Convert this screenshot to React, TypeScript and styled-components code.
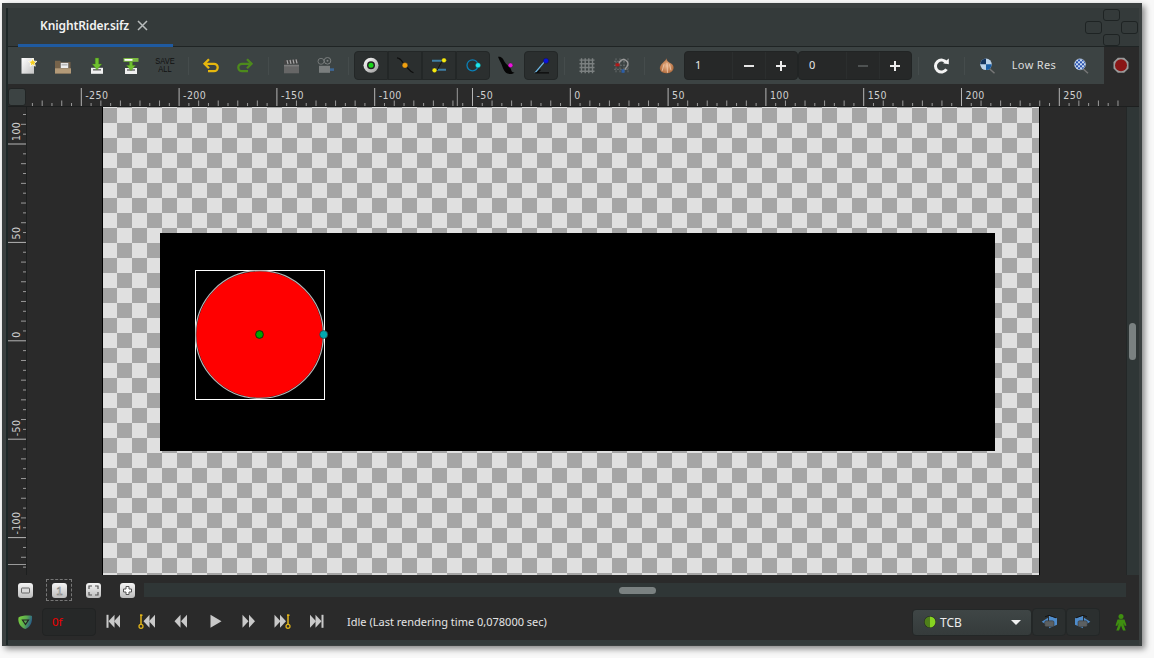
import React from "react";
import styled, { createGlobalStyle } from "styled-components";

const Global = createGlobalStyle`
  html, body { margin: 0; padding: 0; background: #f8f8f8; }
  body { width: 1154px; height: 658px; overflow: hidden; font-family: "Noto Sans", "Liberation Sans", sans-serif; }
`;

const Win = styled.div`
  margin: 3px 0 0 2px;
  width: 1140px;
  height: 643px;
  box-sizing: border-box;
  padding: 5px 3px 1px 4px;
  background: #3b4040;
  box-shadow: 3px 3px 6px rgba(0, 0, 0, 0.45);
  display: flex;
`;
const Inner = styled.div`
  flex: 1;
  min-width: 0;
  border-left: 2px solid #1d2727;
  display: flex;
  flex-direction: column;
  background: #2a2a2a;
`;
const TabBar = styled.div`
  height: 39px;
  box-sizing: border-box;
  background: #343a3a;
  border-bottom: 1px solid #1f2424;
  display: flex;
  justify-content: space-between;
  padding: 0 1px 0 10px;
`;
const Tab = styled.div`
  width: 155px;
  height: 39px;
  box-sizing: border-box;
  border-bottom: 3px solid #1f5aa0;
  padding: 0 0 2px 22px;
  display: flex;
  align-items: center;
  gap: 8px;
  color: #f2f2f2;
  font-size: 12px;
  font-weight: 600;
  letter-spacing: -0.1px;
`;
const TabClose = styled.svg`
  width: 11px;
  height: 11px;
`;
const DockGrid = styled.div`
  display: grid;
  grid-template-columns: 17px 17px 17px;
  grid-template-rows: 12px 13px 12px;
  column-gap: 1px;
  width: 53px;
  margin-top: 1px;
`;
const DockCell = styled.div<{ $c: number; $r: number }>`
  grid-column: ${(p) => p.$c};
  grid-row: ${(p) => p.$r};
  background: #343a3a;
  border: 1px solid #1e2323;
  border-radius: 3px;
  box-sizing: border-box;
`;
const Toolbar = styled.div`
  height: 37px;
  display: flex;
  background: #3c4343;
`;
const ToolMain = styled.div`
  flex: 1;
  display: flex;
  align-items: center;
  padding-left: 4px;
`;
const RecordCell = styled.div`
  width: 35px;
  box-sizing: border-box;
  padding-right: 2px;
  background: #2a2a2a;
  display: flex;
  align-items: center;
  justify-content: center;
`;
const Slot = styled.div<{ $w?: number }>`
  width: ${(p) => p.$w ?? 34}px;
  height: 29px;
  flex: none;
  display: flex;
  align-items: center;
  justify-content: center;
`;
const Sep = styled.div<{ $w?: number }>`
  width: ${(p) => p.$w ?? 12}px;
  flex: none;
  display: flex;
  justify-content: center;
  &::before {
    content: "";
    width: 1px;
    height: 18px;
    background: #454c4c;
  }
`;
const ToolBtn = styled.div<{ $first?: boolean; $last?: boolean }>`
  width: 34px;
  height: 29px;
  flex: none;
  box-sizing: border-box;
  background: #2b2f2f;
  border: 1px solid #232727;
  border-radius: ${(p) => (p.$first ? "4px 0 0 4px" : p.$last ? "0 4px 4px 0" : "0")};
  display: flex;
  align-items: center;
  justify-content: center;
`;
const ActiveBtn = styled(ToolBtn)`
  border-radius: 4px;
`;
const SaveAll = styled.div`
  color: #111;
  font: 8.5px/8px "Liberation Sans", sans-serif;
  text-align: center;
  transform: scaleX(0.88);
  margin-top: -2px;
`;
const Spin = styled.div`
  width: 114px;
  height: 29px;
  flex: none;
  box-sizing: border-box;
  display: flex;
  background: #262828;
  border: 1px solid #212424;
  border-radius: 4px;
`;
const SpinValue = styled.div`
  width: 47px;
  color: #e8e8e8;
  font: 11px "Noto Sans", sans-serif;
  padding: 0 0 2px 10px;
  box-sizing: border-box;
  display: flex;
  align-items: center;
`;
const SpinBtn = styled.div`
  flex: 1;
  border-left: 1px solid #2b2e2e;
  display: flex;
  align-items: center;
  justify-content: center;
`;
const LowRes = styled.div`
  width: 61px;
  flex: none;
  text-align: center;
  font-size: 11px;
  letter-spacing: 0.35px;
  color: #dcdcdc;
  padding: 0 0 2px 3px;
  box-sizing: border-box;
`;
const RulerRow = styled.div`
  height: 23px;
  display: flex;
  flex: none;
  box-sizing: border-box;
  border-bottom: 1px solid #1d1f1f;
`;
const Corner = styled.div`
  width: 18px;
  height: 18px;
  margin: 4px 1px 0 0;
  box-sizing: border-box;
  background: #3c4343;
  border: 1px solid #212424;
  border-radius: 3px;
`;
const RulerSvg = styled.svg`
  display: block;
  font-family: "DejaVu Sans Condensed", "Noto Sans", sans-serif;
`;
const CanvasRow = styled.div`
  height: 468px;
  flex: none;
  display: flex;
  overflow: hidden;
`;
const VRulerBox = styled.div`
  width: 19px;
  flex: none;
  box-sizing: border-box;
  border-right: 1px solid #1d1f1f;
`;
const Viewport = styled.div`
  flex: 1;
  min-width: 0;
  padding-left: 75px;
  background: #2a2a2a;
`;
const Checker = styled.div`
  position: relative;
  width: 936px;
  height: 100%;
  border-left: 1px solid #000;
  border-right: 1px solid #000;
  background: repeating-conic-gradient(#e0e0e0 0 25%, #a5a5a5 0 50%) -1px 1px / 30px 30px;
`;
const Doc = styled.div`
  position: absolute;
  left: 57px;
  top: 126px;
  width: 835px;
  height: 218px;
  background: #000;
`;
const ShapeSvg = styled.svg`
  position: absolute;
  left: 30px;
  top: 32px;
`;
const VTrack = styled.div`
  width: 13px;
  flex: none;
  box-sizing: border-box;
  background: #2f3636;
  border-left: 1px solid #232727;
  padding: 216px 0 0 2px;
`;
const VThumb = styled.div`
  width: 7px;
  height: 37px;
  border-radius: 4px;
  background: #7a8181;
`;
const ScrollRow = styled.div`
  height: 25px;
  box-sizing: border-box;
  flex: none;
  display: flex;
  align-items: center;
  padding: 5px 13px 0 0;
`;
const FrameBtnSlot = styled.div`
  width: 34px;
  height: 22px;
  flex: none;
  display: flex;
  align-items: center;
  justify-content: center;
`;
const FocusBox = styled.div`
  width: 26px;
  height: 22px;
  box-sizing: border-box;
  border: 1px dashed #777;
  display: flex;
  align-items: center;
  justify-content: center;
`;
const FrameBtn = styled.div`
  width: 15px;
  height: 15px;
  border-radius: 3px;
  background: linear-gradient(#f4f4f4, #bcbcbc);
  display: flex;
  align-items: center;
  justify-content: center;
`;
const HTrack = styled.div`
  flex: 1;
  height: 14px;
  background: #2f3636;
  display: flex;
  align-items: center;
  padding-left: 475px;
`;
const HThumb = styled.div`
  width: 37px;
  height: 7px;
  border-radius: 4px;
  background: #7a8181;
`;
const StatusRow = styled.div`
  height: 40px;
  box-sizing: border-box;
  padding-top: 4px;
  flex: none;
  display: flex;
  align-items: center;
`;
const Shield = styled.div`
  width: 34px;
  flex: none;
  display: flex;
  justify-content: center;
`;
const TimeBox = styled.div`
  width: 54px;
  height: 28px;
  flex: none;
  box-sizing: border-box;
  background: #262828;
  border: 1px solid #212323;
  border-radius: 4px;
  color: #f00000;
  font: 11.5px "Noto Sans", sans-serif;
  display: flex;
  align-items: center;
  padding: 0 0 1px 9px;
`;
const PlaySlot = styled.div`
  width: 34px;
  flex: none;
  display: flex;
  justify-content: center;
`;
const StatusText = styled.div`
  flex: 1;
  padding: 0 0 1px 13px;
  color: #e4e4e4;
  font-size: 11px;
`;
const Combo = styled.div`
  width: 120px;
  height: 27px;
  flex: none;
  box-sizing: border-box;
  background: linear-gradient(#3f4646, #353b3b);
  border: 1px solid #232727;
  border-radius: 4px;
  display: flex;
  align-items: center;
  padding: 0 10px 0 10px;
  gap: 3px;
  color: #ececec;
  font-size: 12px;
`;
const ComboLabel = styled.span`
  flex: 1;
`;
const Caret = styled.div`
  width: 0;
  height: 0;
  border-left: 5px solid transparent;
  border-right: 5px solid transparent;
  border-top: 5px solid #f0f0f0;
`;
const InterpBtn = styled.div`
  width: 34px;
  height: 28px;
  flex: none;
  box-sizing: border-box;
  background: #2b2f2f;
  border: 1px solid #232727;
  border-radius: 4px;
  display: flex;
  align-items: center;
  justify-content: center;
`;
const Person = styled.div`
  width: 39px;
  box-sizing: border-box;
  padding-left: 3px;
  flex: none;
  display: flex;
  justify-content: center;
`;
const Band = styled.div`
  height: 5px;
  flex: none;
  background: #333a3a;
`;

const I: React.FC<{ children: React.ReactNode; s?: number }> = ({ children, s = 24 }) => (
  <svg width={s} height={s} viewBox={`0 ${s === 24 ? 0.7 : 0} ${s} ${s}`} style={{ display: "block" }}>
    {children}
  </svg>
);

const NewIcon = () => (
  <I>
    <defs>
      <linearGradient id="pg" x1="0" y1="0" x2="1" y2="1">
        <stop offset="0" stopColor="#fff" />
        <stop offset="1" stopColor="#c4c4c4" />
      </linearGradient>
    </defs>
    <rect x="4.5" y="4.7" width="12.5" height="15.7" fill="url(#pg)" />
    <polygon points="15.7,4.9 16.9,7.8 19.9,8.1 17.6,10 18.3,12.9 15.7,11.4 13.1,12.9 13.8,10 11.5,8.1 14.5,7.8" fill="#f5cf1e" stroke="#fff" strokeWidth="0.8" />
  </I>
);
const OpenIcon = () => (
  <I>
    <path d="M4 7.5h5l1 1.3h9.5V20.2H4z" fill="#76634a" />
    <rect x="9.5" y="9.500" width="8" height="5.500" fill="#eee" stroke="#555" strokeWidth="0.5" />
    <rect x="10.5" y="11.200" width="6" height="0.8" fill="#888" />
    <rect x="4" y="15" width="16" height="5.2" fill="#b39a78" />
  </I>
);
const Tray = ({ x = 6, y = 14 }: { x?: number; y?: number }) => (
  <g>
    <rect x={x} y={y} width="12" height="6" fill="#f0f0f0" />
    <rect x={x + 2} y={y + 1.2} width="8" height="1.6" fill="#777" />
  </g>
);
const SaveIcon = () => (
  <I>
    <Tray y={14.5} />
    <path d="M10.200 4.700h3.600v6h3L12 16.500l-4.800-5.800h3z" fill="#6fc030" stroke="#3e7a14" strokeWidth="0.4" />
  </I>
);
const SaveAsIcon = () => (
  <I>
    <Tray y={14.7} />
    <path d="M10.400 8.500h3.200v3.500h3L12 17.300l-4.600-5.300h3z" fill="#6fc030" stroke="#3e7a14" strokeWidth="0.4" />
    <rect x="4.500" y="4.700" width="15" height="3.800" fill="#7ab840" />
    <rect x="5.500" y="5.700" width="8" height="1.800" fill="#fff" />
  </I>
);
const Undo = ({ c, flip }: { c: string; flip?: boolean }) => (
  <I>
    <g transform={flip ? "translate(24 0) scale(-1 1)" : undefined} fill="none" stroke={c} strokeWidth="2.300">
      <path d="M5.500 10.500H15a3.700 3.700 0 0 1 0 7.400H9" />
      <path d="M10 6L5.500 10.500 10 15" />
    </g>
  </I>
);
const Clapper = () => (
  <I>
    <rect x="5" y="11.500" width="15" height="8.500" fill="#666" />
    <rect x="5" y="11.500" width="15" height="1.600" fill="#7c7c7c" />
    <path d="M5 7l14-1 .5 4.500L5 11z" fill="#444" />
    <path d="M8 6.800l1 4M11 6.500l1 4M14 6.300l1 4M17 6.100l1 4" stroke="#a8a8a8" strokeWidth="1.200" />
  </I>
);
const Camera = () => (
  <I>
    <circle cx="8" cy="8" r="3" fill="none" stroke="#737777" />
    <circle cx="14.500" cy="7.500" r="3.300" fill="none" stroke="#7c8080" />
    <circle cx="14.500" cy="7.500" r="1" fill="#7c8080" />
    <rect x="6" y="12.500" width="11" height="7" fill="#7a7e7e" />
    <rect x="17" y="15" width="4" height="2.600" fill="#3d6795" />
  </I>
);
const TransformIcon = () => (
  <I>
    <defs>
      <linearGradient id="tf" x1="0" y1="0" x2="1" y2="1">
        <stop offset="0" stopColor="#fff" />
        <stop offset="1" stopColor="#999" />
      </linearGradient>
    </defs>
    <circle cx="12" cy="12" r="7.500" fill="url(#tf)" />
    <circle cx="12" cy="12" r="4" fill="#222" />
    <circle cx="12" cy="12" r="2.500" fill="#19d619" />
  </I>
);
const SmoothIcon = () => (
  <I>
    <path d="M4 4.500c5 .5 5 5 8 7.500s4 6 8.500 7.500" fill="none" stroke="#0d0d0d" strokeWidth="1.200" />
    <circle cx="12" cy="12" r="2.800" fill="#f0a010" stroke="#222" strokeWidth="0.400" />
  </I>
);
const ScaleIcon = () => (
  <I>
    <path d="M5 7.500h12M19 16.500H7" stroke="#3f7fa5" strokeWidth="2" />
    <path d="M10 17l5-9" stroke="#111" strokeWidth="1" />
    <circle cx="17" cy="7" r="2.400" fill="#f6e90e" stroke="#222" strokeWidth="0.400" />
    <circle cx="7.500" cy="17" r="2.400" fill="#f6e90e" stroke="#222" strokeWidth="0.400" />
  </I>
);
const RotateIcon = () => (
  <I>
    <circle cx="11.500" cy="12" r="5.500" fill="none" stroke="#0b7fb5" strokeWidth="1.300" />
    <circle cx="17" cy="12" r="2.500" fill="#1de6ee" stroke="#143" strokeWidth="0.300" />
  </I>
);
const MirrorIcon = () => (
  <I>
    <path d="M3 3.500c4-.5 5 2 6.500 5s6 5 6.500 7.500 1 3 3.500 3.500c-3 2-7 1.500-9-.5S7.500 13.500 6.500 11 4 6.500 3 3.500z" fill="#050505" />
    <circle cx="15.500" cy="12" r="2.300" fill="#ee10e0" stroke="#222" strokeWidth="0.300" />
  </I>
);
const NormalIcon = () => (
  <I>
    <path d="M6 19.500l11-13" stroke="#6db8e6" strokeWidth="1.300" />
    <path d="M6 19.500h14M8 19.500l3.500-3" stroke="#0a0a0a" strokeWidth="1.200" fill="none" />
    <circle cx="17" cy="7.500" r="2.600" fill="#0a12dc" stroke="#111" strokeWidth="0.300" />
  </I>
);
const GridIcon = () => (
  <I>
    <path d="M6.500 5v15M10.200 5v15M13.800 5v15M17.500 5v15M4.500 6.800h15M4.500 10.500h15M4.500 14.200h15M4.500 17.900h15" stroke="#7b8080" strokeWidth="1.400" />
  </I>
);
const SnapIcon = () => (
  <I>
    <path d="M7 5v14M11 5v14M15 5v14M19 5v14M5 8h15M5 12h15M5 16h15" stroke="#666c6c" strokeWidth="1" strokeDasharray="2 1" />
    <path d="M10 11a4.500 4.500 0 1 1 7 3.500l-1 2" fill="none" stroke="#9a9a9a" strokeWidth="1.400" />
    <rect x="6.500" y="10" width="4" height="3" fill="#b01818" />
    <rect x="12.500" y="16" width="3" height="3.500" fill="#2b5ea8" />
  </I>
);
const OnionIcon = () => (
  <I>
    <defs>
      <radialGradient id="on" cx="0.500" cy="0.500" r="0.650">
        <stop offset="0" stopColor="#eab48a" />
        <stop offset="1" stopColor="#a2592a" />
      </radialGradient>
    </defs>
    <path d="M11.500 5c.2 2.500 1.500 3.500 5 5.500s3 9-4 9.500C6 20.500 3.500 16 5.500 12.500S10.500 8 11.500 5z" fill="url(#on)" />
    <path d="M9 11l-2 7M12 9.500l.5 10M14.500 11l1.500 6" stroke="#f3d6bb" strokeWidth="0.700" fill="none" />
  </I>
);
const RefreshIcon = () => (
  <I>
    <path d="M17.500 9.500a6 6 0 1 0 0 6.500" fill="none" stroke="#f4f4f4" strokeWidth="3" />
    <polygon points="14,10 19.800,11 19.800,5.100" fill="#f4f4f4" />
  </I>
);
const LensHigh = () => (
  <I>
    <path d="M15.500 15.500l5 4.500" stroke="#777" strokeWidth="1.500" />
    <circle cx="12" cy="11" r="5.800" fill="#bcd3ea" />
    <path d="M12 5.200a5.800 5.800 0 0 0-5.800 5.800H12z" fill="#14355e" />
    <path d="M12 11v5.800a5.800 5.800 0 0 0 5.800-5.800z" fill="#1c5fa5" />
  </I>
);
const LensLow = () => (
  <I>
    <defs>
      <pattern id="lp" width="4" height="4" patternUnits="userSpaceOnUse">
        <rect width="4" height="4" fill="#c6d6f0" />
        <rect width="2" height="2" fill="#2b55b0" />
        <rect x="2" y="2" width="2" height="2" fill="#2b55b0" />
      </pattern>
    </defs>
    <path d="M15 15.500l5 4.500" stroke="#777" strokeWidth="1.500" />
    <circle cx="12" cy="11" r="5.500" fill="url(#lp)" stroke="#cde" strokeWidth="0.500" />
  </I>
);
const RecordIcon = () => (
  <I>
    <polygon points="8.800,4.500 15.200,4.500 19.500,8.800 19.500,15.200 15.200,19.500 8.800,19.500 4.500,15.200 4.500,8.800" fill="#9a9a9a" />
    <circle cx="12" cy="12" r="6" fill="#8a1616" />
  </I>
);
const Minus = ({ dim }: { dim?: boolean }) => (
  <I s={12}>
    <rect x="1" y="5" width="10" height="2" fill={dim ? "#4e5252" : "#e6e6e6"} />
  </I>
);
const Plus = () => (
  <I s={12}>
    <path d="M1 5h4V1h2v4h4v2H7v4H5V7H1z" fill="#ececec" />
  </I>
);
const G1 = () => (
  <I s={11}>
    <rect x="1.500" y="3" width="8" height="5" rx="0.500" fill="#d8d8d8" stroke="#666" />
  </I>
);
const G2 = () => (
  <I s={11}>
    <text x="5.500" y="10" fontSize="11.500" fontFamily="Liberation Sans, sans-serif" textAnchor="middle" fill="#fafafa" stroke="#808080" strokeWidth="0.600">
      1
    </text>
  </I>
);
const G3 = () => (
  <I s={11}>
    <path d="M1 4V1h3M7 1h3v3M10 7v3H7M4 10H1V7" fill="none" stroke="#555" strokeWidth="1.200" />
  </I>
);
const G4 = () => (
  <I s={11}>
    <path d="M4 1.500h3v2.500h2.500v3H7v2.500H4V7H1.500V4H4z" fill="#fff" stroke="#555" />
  </I>
);
const ShieldIcon = () => (
  <svg width="16" height="16" viewBox="0 0 16 16" style={{ display: "block" }}>
    <defs>
      <linearGradient id="sh" x1="0" y1="0" x2="1" y2="0.300">
        <stop offset="0" stopColor="#7cd23c" />
        <stop offset="0.600" stopColor="#5aaa50" />
        <stop offset="1" stopColor="#2a5f88" />
      </linearGradient>
    </defs>
    <path d="M1.500 3.500C4 1.500 12 1 15 2c.5 6-1.500 11-6.500 13C4 14 .5 9 1.500 3.500z" fill="url(#sh)" />
    <path d="M5.500 6h6L8.500 10.500z" fill="none" stroke="#222" strokeWidth="1.200" />
  </svg>
);
const c = "#c9c9c9";
const TriL = ({ x }: { x: number }) => <polygon points={`${x + 6},5.500 ${x + 6},18.500 ${x},12`} fill={c} />;
const TriR = ({ x }: { x: number }) => <polygon points={`${x},5.500 ${x},18.500 ${x + 6},12`} fill={c} />;
const Key = ({ x }: { x: number }) => (
  <g stroke="#e0b318" fill="none">
    <path d={`M${x} 6h2.500M${x + 1} 5v10`} strokeWidth="1.500" />
    <circle cx={x + 1} cy="17" r="2" strokeWidth="1.300" />
  </g>
);
const SeekBegin = () => (
  <I>
    <rect x="5.500" y="5.500" width="2" height="13" fill={c} />
    <TriL x={7.5} />
    <TriL x={13} />
  </I>
);
const KeyPrev = () => (
  <I>
    <Key x={5} />
    <TriL x={8.5} />
    <TriL x={14} />
  </I>
);
const Prev = () => (
  <I>
    <TriL x={5.5} />
    <TriL x={12} />
  </I>
);
const Play = () => (
  <I>
    <polygon points="7.500,5.500 18.500,12 7.500,18.500" fill={c} />
  </I>
);
const Next = () => (
  <I>
    <TriR x={5.5} />
    <TriR x={12} />
  </I>
);
const KeyNext = () => (
  <I>
    <TriR x={3.5} />
    <TriR x={9} />
    <Key x={16} />
  </I>
);
const SeekEnd = () => (
  <I>
    <TriR x={5} />
    <TriR x={10.5} />
    <rect x="16.500" y="5.500" width="2" height="13" fill={c} />
  </I>
);
const InterpIcon = ({ flip }: { flip?: boolean }) => (
  <I>
    <g transform={flip ? "translate(24 0) scale(-1 1)" : undefined}>
      <polygon points="4.700,12.500 11,8.500 11,16.500" fill="#4f8ccb" />
      <polygon points="12,6.500 20,9 20,15.500 12,19" fill="#4f8ccb" />
      <path d="M8 7.500L12 6l7 2.500" stroke="#151515" strokeWidth="1" fill="none" />
      <rect x="7.700" y="11.500" width="9.300" height="6" rx="1.500" fill="#5c6062" stroke="#2a2a2a" strokeWidth="0.500" />
    </g>
  </I>
);
const PersonIcon = () => (
  <I s={18}>
    <circle cx="9" cy="3.500" r="2.500" fill="#3f8f10" />
    <path d="M5.500 6.500h7l2 6-1.800.5-1-3v2l2 5.500H11L9 12.500 7 17.500H4.300l2-5.500v-2l-1 3-1.800-.5z" fill="#3f8f10" />
  </I>
);

const hx = (x: number) => x - 27;
const HRuler = () => {
  const ticks: React.ReactNode[] = [];
  for (let n = -55; n <= 56; n++) {
    const x = hx(570.3 + n * 9.78);
    if (n % 10 === 0) continue;
    const h = n % 2 === 0 ? 5.5 : 3;
    ticks.push(<line key={n} x1={x} x2={x} y1={22 - h} y2={22} stroke="#9a9a9a" />);
  }
  const labels = [-250, -200, -150, -100, -50, 0, 50, 100, 150, 200, 250];
  return (
    <RulerSvg width="1111" height="22" viewBox="0 0 1111 22">
      {ticks}
      <line x1={hx(457.3)} x2={hx(457.3)} y1="4" y2="22" stroke="#9a9a9a" />
      {labels.map((v) => {
        const x = hx(570.3 + (v / 5) * 9.78);
        return (
          <g key={v}>
            <line x1={x} x2={x} y1="4" y2="22" stroke="#b5b5b5" />
            <text x={x + 4} y="15" fontSize="10.500" letterSpacing="0.400" fill="#d0d0d0">
              {v}
            </text>
          </g>
        );
      })}
    </RulerSvg>
  );
};
const vy = (y: number) => y - 107;
const VRuler = () => {
  const ticks: React.ReactNode[] = [];
  for (let n = -23; n <= 24; n++) {
    if (n % 10 === 0) continue;
    const y = vy(340.8 + n * 9.84);
    const w = n % 2 === 0 ? 5 : 3;
    ticks.push(<line key={n} x1={18 - w} x2={18} y1={y} y2={y} stroke="#9a9a9a" />);
  }
  return (
    <RulerSvg width="18" height="468" viewBox="0 0 18 468">
      {ticks}
      <line x1="0" x2="18" y1={vy(564.5)} y2={vy(564.5)} stroke="#9a9a9a" />
      {[100, 50, 0, -50, -100].map((v) => {
        const y = vy(340.8 - (v / 5) * 9.84);
        return (
          <g key={v}>
            <line x1="0" x2="18" y1={y} y2={y} stroke="#b5b5b5" />
            <text transform={`translate(12 ${y - 3}) rotate(-90)`} fontSize="10.500" letterSpacing="0.400" fill="#d0d0d0">
              {v}
            </text>
          </g>
        );
      })}
    </RulerSvg>
  );
};

const Shape = () => (
  <ShapeSvg width="140" height="140" viewBox="0 0 140 140">
    <rect x="5.500" y="5.500" width="129" height="129" fill="none" stroke="#fff" />
    <circle cx="69.500" cy="69.500" r="63.200" fill="#ff0000" />
    <circle cx="69.500" cy="69.500" r="63.900" fill="none" stroke="#b5b5b5" strokeWidth="1.200" />
    <circle cx="69.500" cy="69.500" r="3.900" fill="#00a400" stroke="#111" strokeWidth="0.800" />
    <circle cx="133.700" cy="69.500" r="4" fill="#00a8b0" stroke="#333" strokeWidth="0.700" />
  </ShapeSvg>
);

export default function App() {
  return (
    <>
      <Global />
      <Win>
        <Inner>
          <TabBar>
            <Tab>
              KnightRider.sifz
              <TabClose viewBox="0 0 11 11">
                <path d="M1 1l9 9M10 1l-9 9" stroke="#b8bcbc" strokeWidth="1.500" />
              </TabClose>
            </Tab>
            <DockGrid>
              <DockCell $c={2} $r={1} />
              <DockCell $c={1} $r={2} />
              <DockCell $c={3} $r={2} />
              <DockCell $c={2} $r={3} />
            </DockGrid>
          </TabBar>
          <Toolbar>
            <ToolMain>
              <Slot><NewIcon /></Slot>
              <Slot><OpenIcon /></Slot>
              <Slot><SaveIcon /></Slot>
              <Slot><SaveAsIcon /></Slot>
              <Slot>
                <SaveAll>SAVE<br />ALL</SaveAll>
              </Slot>
              <Sep />
              <Slot><Undo c="#e6b70e" /></Slot>
              <Slot><Undo c="#4d8a1c" flip /></Slot>
              <Sep />
              <Slot><Clapper /></Slot>
              <Slot><Camera /></Slot>
              <Sep />
              <ToolBtn $first><TransformIcon /></ToolBtn>
              <ToolBtn><SmoothIcon /></ToolBtn>
              <ToolBtn><ScaleIcon /></ToolBtn>
              <ToolBtn $last><RotateIcon /></ToolBtn>
              <Slot><MirrorIcon /></Slot>
              <ActiveBtn><NormalIcon /></ActiveBtn>
              <Sep />
              <Slot><GridIcon /></Slot>
              <Slot><SnapIcon /></Slot>
              <Sep />
              <Slot><OnionIcon /></Slot>
              <Spin>
                <SpinValue>1</SpinValue>
                <SpinBtn><Minus /></SpinBtn>
                <SpinBtn><Plus /></SpinBtn>
              </Spin>
              <Spin>
                <SpinValue>0</SpinValue>
                <SpinBtn><Minus dim /></SpinBtn>
                <SpinBtn><Plus /></SpinBtn>
              </Spin>
              <Sep />
              <Slot><RefreshIcon /></Slot>
              <Sep />
              <Slot $w={32}><LensHigh /></Slot>
              <LowRes>Low Res</LowRes>
              <Slot><LensLow /></Slot>
            </ToolMain>
            <RecordCell><RecordIcon /></RecordCell>
          </Toolbar>
          <RulerRow>
            <Corner />
            <HRuler />
          </RulerRow>
          <CanvasRow>
            <VRulerBox><VRuler /></VRulerBox>
            <Viewport>
              <Checker>
                <Doc><Shape /></Doc>
              </Checker>
            </Viewport>
            <VTrack><VThumb /></VTrack>
          </CanvasRow>
          <ScrollRow>
            <FrameBtnSlot><FrameBtn><G1 /></FrameBtn></FrameBtnSlot>
            <FrameBtnSlot><FocusBox><FrameBtn><G2 /></FrameBtn></FocusBox></FrameBtnSlot>
            <FrameBtnSlot><FrameBtn><G3 /></FrameBtn></FrameBtnSlot>
            <FrameBtnSlot><FrameBtn><G4 /></FrameBtn></FrameBtnSlot>
            <HTrack><HThumb /></HTrack>
          </ScrollRow>
          <StatusRow>
            <Shield><ShieldIcon /></Shield>
            <TimeBox>0f</TimeBox>
            <PlaySlot><SeekBegin /></PlaySlot>
            <PlaySlot><KeyPrev /></PlaySlot>
            <PlaySlot><Prev /></PlaySlot>
            <PlaySlot><Play /></PlaySlot>
            <PlaySlot><Next /></PlaySlot>
            <PlaySlot><KeyNext /></PlaySlot>
            <PlaySlot><SeekEnd /></PlaySlot>
            <StatusText>Idle (Last rendering time 0,078000 sec)</StatusText>
            <Combo>
              <svg width="14" height="14" viewBox="0 0 14 14" style={{ display: "block" }}>
                <circle cx="7" cy="7" r="6" fill="#1f2323" />
                <path d="M7 1.500a5.500 5.500 0 0 1 0 11z" fill="#86d321" />
                <path d="M7 1.500a5.500 5.500 0 0 0 0 11z" fill="#4f7f1a" />
              </svg>
              <ComboLabel>TCB</ComboLabel>
              <Caret />
            </Combo>
            <InterpBtn><InterpIcon /></InterpBtn>
            <InterpBtn><InterpIcon flip /></InterpBtn>
            <Person><PersonIcon /></Person>
          </StatusRow>
          <Band />
        </Inner>
      </Win>
    </>
  );
}
